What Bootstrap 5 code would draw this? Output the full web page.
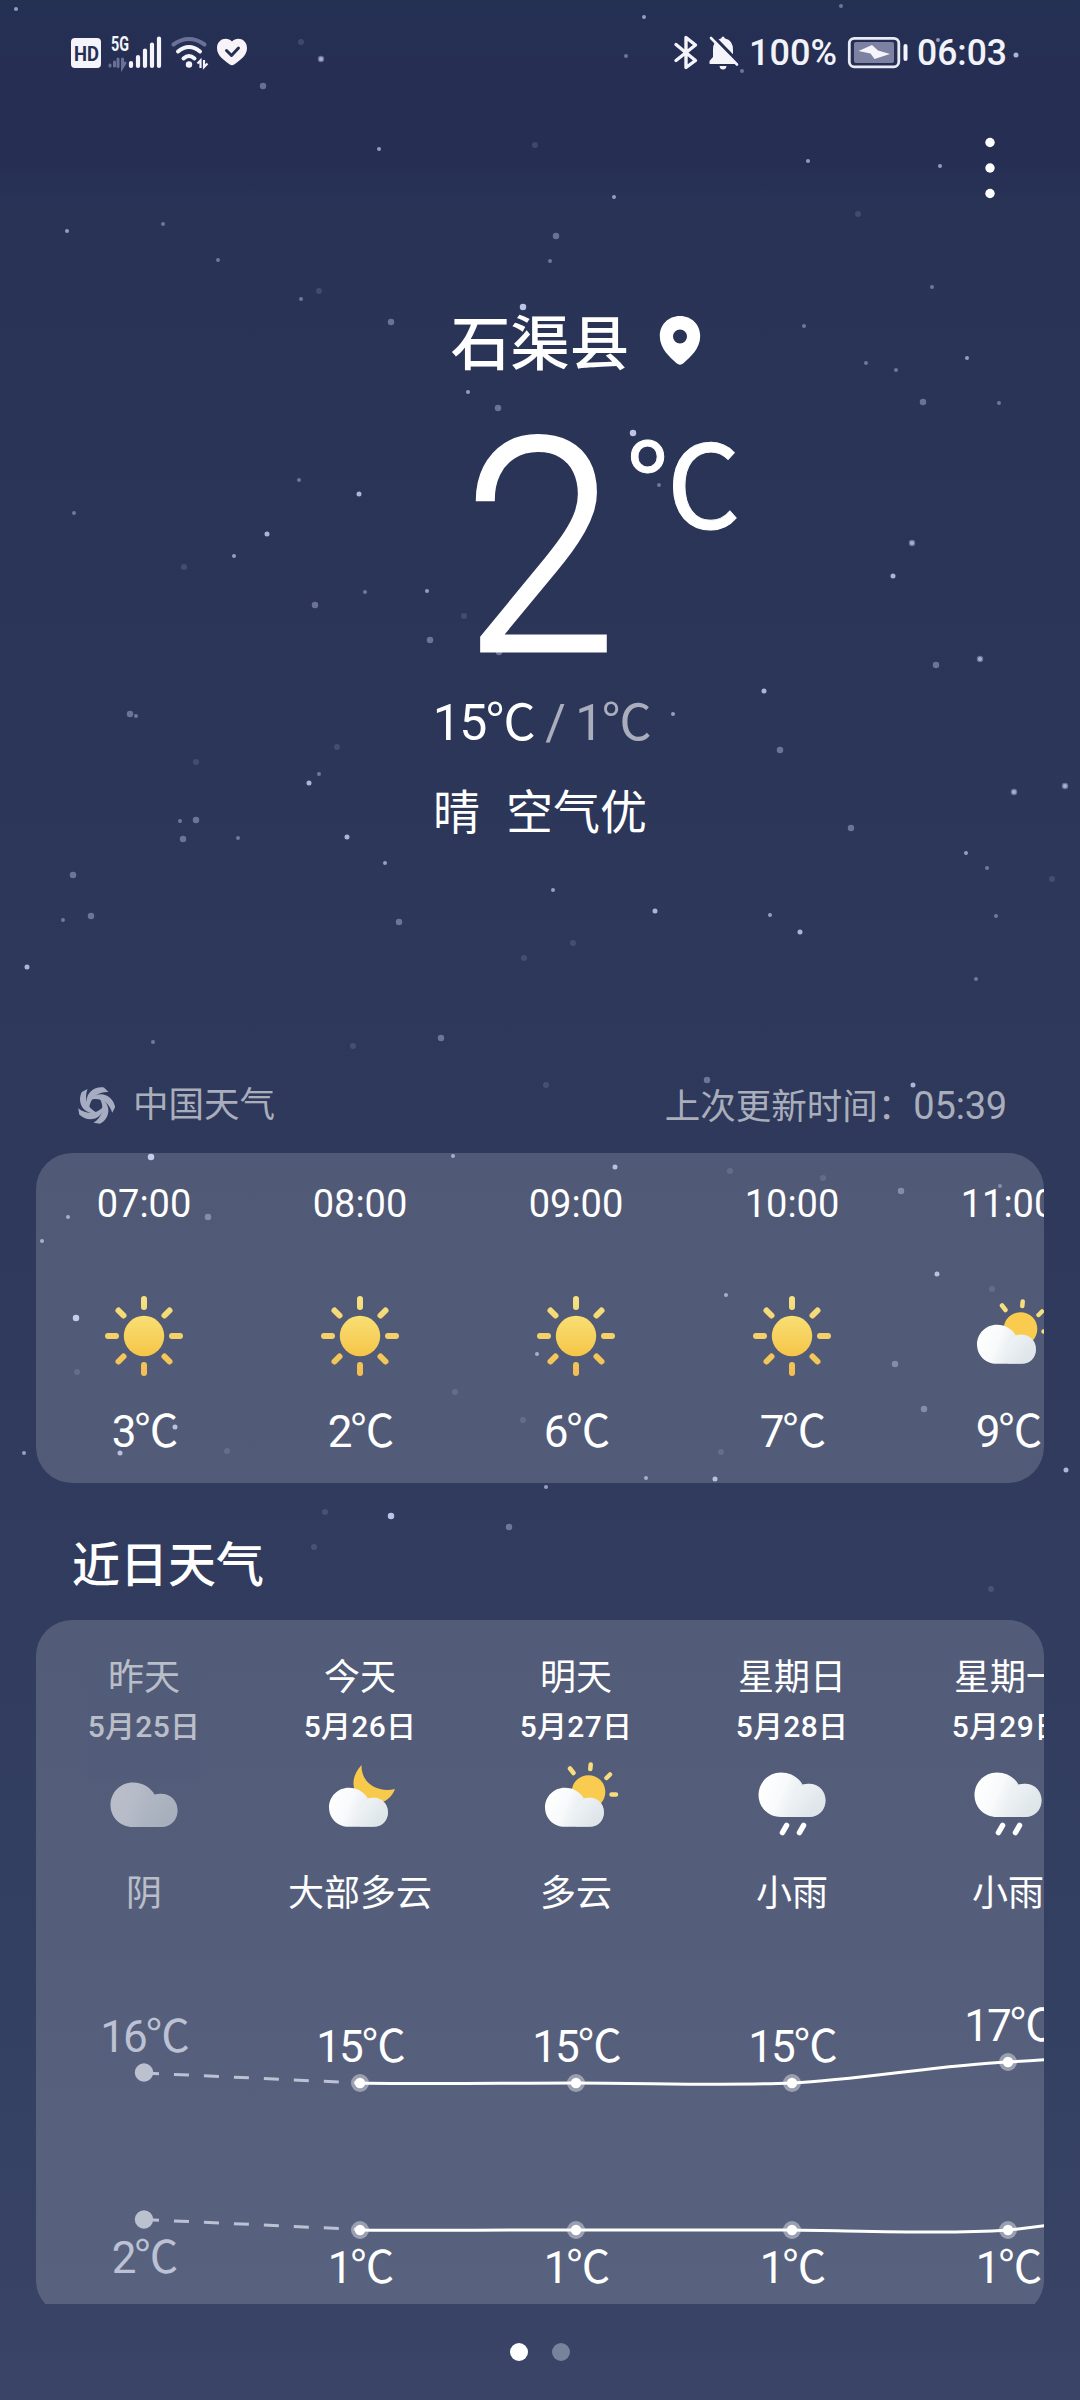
<!DOCTYPE html>
<html lang="zh-CN">
<head>
<meta charset="utf-8">
<meta name="viewport" content="width=device-width, initial-scale=1">
<title>天气</title>
<link href="https://cdn.jsdelivr.net/npm/bootstrap@5.3.0/dist/css/bootstrap.min.css" rel="stylesheet">
<style>
body{margin:0;background:#384466;font-family:Roboto,"Noto Sans CJK SC",sans-serif;color:#fff}
.phone{width:1080px;height:2400px;background:linear-gradient(#243153 0,#262e54 60px,#262e54 165px,#283356 200px,#2b3557 600px,#2d385a 1000px,#303b5d 1500px,#344062 2000px,#394466 2400px)}
.sky{left:0;top:0;width:1080px;height:2400px}
.sky path{fill:none;stroke-linecap:round}
svg{display:block;flex:none}
svg text{font-family:Roboto,"Noto Sans CJK SC",sans-serif}
.statusbar{height:106px;padding:0 71px 0 71px}
.st-txt{font-size:36.5px;line-height:40px;font-weight:500;color:#f2f3f8}
.menu-row{height:124px;padding-right:84px}
.city-row{height:64px;margin-top:80px}
.city-name{font-size:59.500px;line-height:64px;font-weight:500;padding-top:5px}
.now-row{height:216px;margin-top:62px}
.now-num{font-size:299px;line-height:226px;font-weight:300;transform:scaleX(.93);width:128px;-webkit-text-stroke:3px #fff}
.now-unit{font-size:115px;line-height:106px;font-weight:400;letter-spacing:0;-webkit-text-stroke:1px #fff}
.range-row{height:60px;margin-top:40px;font-size:50px;line-height:62px;letter-spacing:-1.500px;padding-left:3px}
.cond-row{height:60px;margin-top:29px;font-size:47px;line-height:64px;gap:26px}
.dim{opacity:.6}
.src-row{height:50px;margin-top:239px;padding:0 73px 0 77px;font-size:35.500px;line-height:53px;color:rgba(255,255,255,.6)}
.src-time{font-size:38px;letter-spacing:-.2px}
.pane{background:rgba(255,255,255,.165);border-radius:36px;margin:0 36px;overflow:hidden}
.hourly{height:330px;margin-top:23px}
.slot{width:216px;flex:none;text-align:center}
.hour{font-size:38px;line-height:52px;height:50px;margin-top:25px}
.deg{font-size:44px;line-height:52px;letter-spacing:-2px;margin-top:25px}
.hourly .ico{margin-top:63px}
.hourly .ico.partly{margin-top:59px;margin-bottom:29px}
.headline{font-size:48px;line-height:64px;font-weight:500;margin:51px 0 0 72px;height:60px}
.clip{height:684px;margin-top:26px;overflow:hidden}
.daily{height:696px}
.dname{font-size:36px;line-height:44px;margin-top:36px}
.ddate{font-size:30px;line-height:38px;height:40px;font-weight:500;margin-top:8px;letter-spacing:.3px}
.daily .ico{margin-top:2px}
.dsc{font-size:36px;line-height:48px;height:44px;margin-top:30px}
.chart{margin-top:36px}
.chart text{letter-spacing:-2px}
.pager{height:96px;gap:24px}
.pg{width:18px;height:18px;border-radius:50%;background:#fff}
.pg.off{background:#75839b}
</style>
</head>
<body>
<svg width="0" height="0" class="position-absolute">
  <defs>
    <linearGradient id="gSun" x1="0" y1="0" x2="0" y2="1"><stop offset="0" stop-color="#f9df74"/><stop offset="1" stop-color="#f5c548"/></linearGradient>
    <linearGradient id="gRay" gradientUnits="userSpaceOnUse" x1="0" y1="-40" x2="0" y2="40"><stop offset="0" stop-color="#f7e282"/><stop offset="1" stop-color="#f3bd50"/></linearGradient>
    <linearGradient id="gBack" gradientUnits="userSpaceOnUse" x1="-33" y1="-8" x2="20" y2="14"><stop offset="0" stop-color="#fff"/><stop offset=".4" stop-color="#f8fafb"/><stop offset="1" stop-color="#d9e1e6"/></linearGradient>
    <linearGradient id="gFront" x1="0" y1="0" x2=".6" y2="1"><stop offset="0" stop-color="#f4f7f9"/><stop offset="1" stop-color="#e1e8ec"/></linearGradient>
    <symbol id="sun" viewBox="-45 -45 90 90">
      <g fill="none" stroke="url(#gRay)" stroke-width="6" stroke-linecap="round"><path d="M.01-37 0-29M25.500-25.500l-5 5M36 .01 28 0M25.500 25.500l-5-5M.01 37 0 29M-25.500 25.500l5-5M-36 .01-28 0M-25.500-25.500l5 5"/></g>
      <circle r="20.200" fill="url(#gSun)"/>
    </symbol>
    <g id="cloud">
      <path d="M-11-22.500C-1-22.500 7-17 10.500-10.500C24-13.500 33.500-5.500 33.500 5.500C33.500 15 26.500 22 17 22H-11C-24 22-33.500 12-33.500 0S-24-22.500-11-22.500Z" fill="url(#gBack)"/>
      <path d="M17-11.300C27-11.300 33.500-4 33.500 5.500S27 22 17 22H2C-1 14 0-9 17-11.300Z" fill="url(#gFront)" opacity=".6"/>
    </g>
    <symbol id="overcast" viewBox="-45 -45 90 90"><use href="#cloud" y="10"/></symbol>
    <symbol id="rain" viewBox="-45 -45 90 90"><use href="#cloud"/><path d="M-5.500 30.500-9.500 37.500M11.500 30.500 7.500 37.500" stroke="#fff" stroke-width="5.500" stroke-linecap="round" fill="none"/></symbol>
    <symbol id="partly" viewBox="-45 -45 90 90">
      <g fill="none" stroke="#f8dd7d" stroke-width="4.500" stroke-linecap="round"><path d="M-6-26.500-2.500-22M14.700-30.500 14.300-26M34-20.500 30.500-17M35.500-.500h4.500"/></g>
      <circle cx="12.500" cy="-3" r="16.800" fill="#f9cc50"/>
      <use href="#cloud" transform="translate(-1.500 12.500) scale(.88)"/>
    </symbol>
    <symbol id="mooncloud" viewBox="-45 -45 90 90">
      <path d="M1.500-30C-13-14-7 4 12 8C24 10 32 2 35-6C17-2 1-12 1.500-30Z" fill="#f8ca4b"/>
      <use href="#cloud" transform="translate(-1.500 12.500) scale(.88)"/>
    </symbol>
  </defs>
</svg>

<div class="phone position-relative overflow-hidden">
  <svg class="sky position-absolute" viewBox="0 0 1080 2400">
    <g stroke="#c3cbef">
      <path stroke-width="6.500" opacity=".95" d="M523 307h0M633 433h0M391 1516h0M151 1157h0M76 1318h0"/>
      <path stroke-width="5" opacity=".85" d="M359 494h0M267 534h0M893 576h0M764 691h0M309 783h0M347 837h0M655 911h0M800 932h0M27 967h0M1016 55h0M715 1479h0M1066 1470h0M913 1085h0M937 1274h0M615 1167h0M120 1453h0M175 1427h0"/>
      <path stroke-width="4" opacity=".7" d="M16 9h0M321 59h0M644 17h0M938 40h0M614 197h0M940 166h0M808 161h0M379 149h0M67 231h0M468 392h0M967 358h0M427 591h0M385 863h0M966 853h0M24 1453h0M546 1487h0M646 1478h0M453 1156h0M234 556h0M1014 792h0M1065 786h0M912 543h0M553 890h0M770 915h0M673 714h0M980 659h0M68 1217h0M42 1241h0M726 1295h0M537 1354h0"/>
      <path stroke-width="6.500" opacity=".42" d="M263 86h0M556 236h0M391 322h0M498 408h0M315 605h0M430 640h0M499 652h0M936 665h0M130 714h0M780 750h0M196 820h0M183 839h0M73 875h0M91 916h0M399 922h0M851 828h0M441 1038h0M208 1217h0M509 1527h0M707 1080h0M901 1191h0M895 1364h0M924 1409h0M923 402h0M321 59h0M1014 792h0M1065 786h0M980 659h0M912 543h0"/>
      <path stroke-width="4" opacity=".45" d="M841 6h0M626 56h0M742 71h0M163 224h0M218 260h0M301 299h0M550 261h0M932 287h0M804 326h0M866 363h0M896 370h0M999 403h0M659 485h0M299 480h0M365 592h0M74 513h0M136 716h0M319 774h0M180 821h0M238 838h0M63 920h0M987 868h0M996 916h0M153 1042h0M1000 1186h0M976 979h0"/>
      <path stroke-width="6" opacity=".16" d="M301 42h0M535 145h0M858 214h0M319 291h0M184 567h0M464 616h0M196 762h0M337 747h0M1052 879h0M524 958h0M573 943h0M353 1046h0M546 1085h0M730 1171h0M823 1178h0M992 1289h0M77 1372h0M455 1392h0M523 1420h0M227 1451h0M721 1452h0M325 1512h0M314 1547h0M991 1589h0"/>
    </g>
  </svg>

  <div class="position-relative">
    <header class="statusbar d-flex justify-content-between align-items-center">
      <svg width="178" height="46" viewBox="71 30 178 46">
        <rect x="71" y="38" width="30" height="30" rx="4" fill="#f4f4fa"/>
        <text x="74" y="60.500" font-size="21" font-weight="700" fill="#262f53" textLength="25" lengthAdjust="spacingAndGlyphs">HD</text>
        <text x="111" y="51" font-size="19.500" font-weight="700" fill="#f4f4fa" textLength="18" lengthAdjust="spacingAndGlyphs">5G</text>
        <path d="M110 66v-1M114.500 62v4M118 59v7.500M122.500 59v8l2.500-4" stroke="#6b7196" stroke-width="3" fill="none" stroke-linecap="round"/>
        <path d="M131 66v-3M138 66V57M145 66V50.500M152 66V44.500M159 66V38.500" stroke="#f4f4fa" stroke-width="4.200" stroke-linecap="round"/>
        <path d="M173.500 44.500Q189 33.500 204.500 44.500" stroke="#6b7196" stroke-width="4" fill="none" stroke-linecap="round"/>
        <path d="M178 51.500Q189 42.500 200 51.500M183.500 58.500Q189 53.500 194.500 58.500" stroke="#f4f4fa" stroke-width="4" fill="none" stroke-linecap="round"/>
        <circle cx="189" cy="64.500" r="3.200" fill="#f4f4fa"/>
        <path d="M197.500 63.500 200.500 60.500V68M204 60V67L207.500 63.500" stroke="#f4f4fa" stroke-width="2.200" fill="none"/>
        <path d="M232 41.500C227 36 217 39 217 48C217 56 224 60 229.500 64.300Q232 66 234.500 64.300C240 60 247 56 247 48C247 39 237 36 232 41.500Z" fill="#f8f3f8"/>
        <path d="M226.500 50.500 231.500 55.500 238.500 48" stroke="#262f53" stroke-width="3" fill="none" stroke-linecap="round" stroke-linejoin="round"/>
      </svg>
      <div class="d-flex align-items-center">
        <svg width="66" height="36" viewBox="677 35 66 36">
          <path d="M680 44.500 699.500 60.500 690 67.500V37.500L699.500 45 680 60.500" stroke="#f4f4fa" stroke-width="3.400" fill="none" stroke-linejoin="round" stroke-linecap="round"/>
          <path d="M713.500 64V61L717 57V50Q717 40 725 38.500Q727 34.500 729 38.500Q737 40 737 50V57L740.500 61V64ZM723.500 66h7Q730 69.500 727 69.500T723.500 66Z" fill="#f4f4fa"/>
          <path d="M717 36 745 65" stroke="#262f53" stroke-width="3.400"/>
          <path d="M715 38 741 64.500" stroke="#f4f4fa" stroke-width="2.600" stroke-linecap="round"/>
        </svg>
        <svg width="100" height="46" class="ms-2"><text class="st-txt" x="2" y="35" fill="#f2f3f8" textLength="88" lengthAdjust="spacingAndGlyphs">100%</text></svg>
        <svg width="62" height="34" viewBox="848 36 62 34">
          <rect x="850.300" y="38.300" width="49.500" height="28.500" rx="5" fill="none" stroke="#e9ebf3" stroke-width="2.800"/>
          <rect x="855" y="42" width="40" height="21" rx="2" fill="#7d82a3"/>
          <path d="M873 45 859.500 51 871.500 53.500 875.500 59 891 54 879 50.500Z" fill="#f4f4fa"/>
          <path d="M906.500 46V59" stroke="#f4f4fa" stroke-width="4" stroke-linecap="round"/>
        </svg>
        <svg width="94" height="46" style="margin-left:6px"><text class="st-txt" x="2" y="35" fill="#f2f3f8" textLength="90" lengthAdjust="spacingAndGlyphs">06:03</text></svg>
      </div>
    </header>

    <div class="menu-row d-flex align-items-center justify-content-end">
      <svg width="12" height="64" viewBox="-6 -32 12 64" fill="#fff"><circle cy="-25.500" r="4.700"/><circle r="4.700"/><circle cy="25.500" r="4.700"/></svg>
    </div>

    <div class="city-row d-flex align-items-center">
      <div style="flex:1"></div>
      <div class="city-name">石渠县</div>
      <div class="d-flex" style="flex:1">
        <svg width="42" height="50" viewBox="0 0 42 50" style="margin-left:30px;margin-top:-3px"><path fill="#fff" fill-rule="evenodd" d="M21 0C9 0 .8 9 .8 20C.8 33 11 41 17.500 47.300Q21 50 24.500 47.300C31 41 41.200 33 41.200 20C41.200 9 33 0 21 0ZM21 13.500a7 7 0 1 1 0 14a7 7 0 0 1 0-14Z"/></svg>
      </div>
    </div>

    <div class="now-row d-flex">
      <div style="flex:1"></div>
      <div class="now-num d-flex justify-content-center">2</div>
      <div style="flex:1"><div class="now-unit" style="margin-left:22px">℃</div></div>
    </div>
    <div class="range-row d-flex justify-content-center"><span>15℃</span><span class="dim" style="white-space:pre"> / 1℃</span></div>
    <div class="cond-row d-flex justify-content-center"><span>晴</span><span>空气优</span></div>

    <div class="src-row d-flex justify-content-between">
      <div class="d-flex align-items-center">
        <svg width="38" height="38" viewBox="-19 -19 38 38" style="margin-right:18px" fill="#a6adc2">
          <g id="blade"><path d="M-7 4C-14-8-4-19.500 8-17.500L12.500-13C3-13.500-6-8-7 4Z"/></g>
          <use href="#blade" transform="rotate(72)"/><use href="#blade" transform="rotate(144)"/><use href="#blade" transform="rotate(216)"/><use href="#blade" transform="rotate(288)"/>
        </svg>
        <span>中国天气</span>
      </div>
      <span>上次更新时间：<span class="src-time">05:39</span></span>
    </div>

    <section class="pane hourly">
      <div class="d-flex" id="hours"></div>
    </section>

    <h2 class="headline">近日天气</h2>

    <div class="clip">
      <section class="pane daily">
        <div class="d-flex" id="days"></div>
        <svg width="1008" height="360" viewBox="36 1950 1008 360" class="chart">
          <g fill="none" stroke="#fff" stroke-width="3">
            <path stroke="#bcc1d4" stroke-dasharray="15 15" d="M144 2073 360 2083M144 2219.500 360 2229.500"/>
            <path d="M360 2083C430 2084.500 500 2083 576 2083S725 2086 792 2083S940 2065 1008 2062Q1026 2061 1046 2059.500"/>
            <path d="M360 2230C430 2231 500 2229.500 576 2230H792C870 2231 950 2234 1008 2230Q1028 2228 1046 2225.500"/>
          </g>
          <g fill="#bcc1d0"><circle cx="144" cy="2072.500" r="9.200"/><circle cx="144" cy="2219.500" r="9.200"/></g>
          <g id="dots"></g>
          <g font-size="44" text-anchor="middle" id="temps"></g>
        </svg>
      </section>
    </div>
    <div class="pager d-flex justify-content-center align-items-center"><span class="pg"></span><span class="pg off"></span></div>
  </div>
</div>

<script src="https://cdn.jsdelivr.net/npm/bootstrap@5.3.0/dist/js/bootstrap.bundle.min.js"></script>
<script>
const icon = n => `<div class="ico ${n}"><svg width="90" height="90" class="mx-auto"><use href="#${n}"/></svg></div>`;
document.getElementById('hours').innerHTML = [
  ['07:00','sun','3℃'],['08:00','sun','2℃'],['09:00','sun','6℃'],['10:00','sun','7℃'],['11:00','partly','9℃']
].map(h => `<div class="slot"><div class="hour">${h[0]}</div>${icon(h[1])}<div class="deg">${h[2]}</div></div>`).join('');
document.getElementById('days').innerHTML = [
  ['昨天','5月25日','overcast','阴'],['今天','5月26日','mooncloud','大部多云'],['明天','5月27日','partly','多云'],['星期日','5月28日','rain','小雨'],['星期一','5月29日','rain','小雨']
].map((d,i) => `<div class="slot${i ? '' : ' dim'}"><div class="dname">${d[0]}</div><div class="ddate">${d[1]}</div>${icon(d[2])}<div class="dsc">${d[3]}</div></div>`).join('');
const xs = [144,360,576,792,1008];
const hi = [[16,2052],[15,2062],[15,2062],[15,2062],[17,2041]];
const lo = [[2,2273],[1,2283],[1,2283],[1,2283],[1,2283]];
document.getElementById('temps').innerHTML = [hi,lo].map(s => s.map((p,i) =>
  `<text x="${xs[i]}" y="${p[1]}" fill="${i ? '#fff' : '#bcc1d4'}">${p[0]}℃</text>`).join('')).join('');
const pts = [[360,2083],[576,2083],[792,2083],[1008,2062],[360,2230],[576,2230],[792,2230],[1008,2230]];
document.getElementById('dots').innerHTML = pts.map(p =>
  `<circle cx="${p[0]}" cy="${p[1]}" r="9" fill="#fff" opacity=".4"/><circle cx="${p[0]}" cy="${p[1]}" r="5.200" fill="#fff"/>`).join('');
</script>
</body>
</html>
